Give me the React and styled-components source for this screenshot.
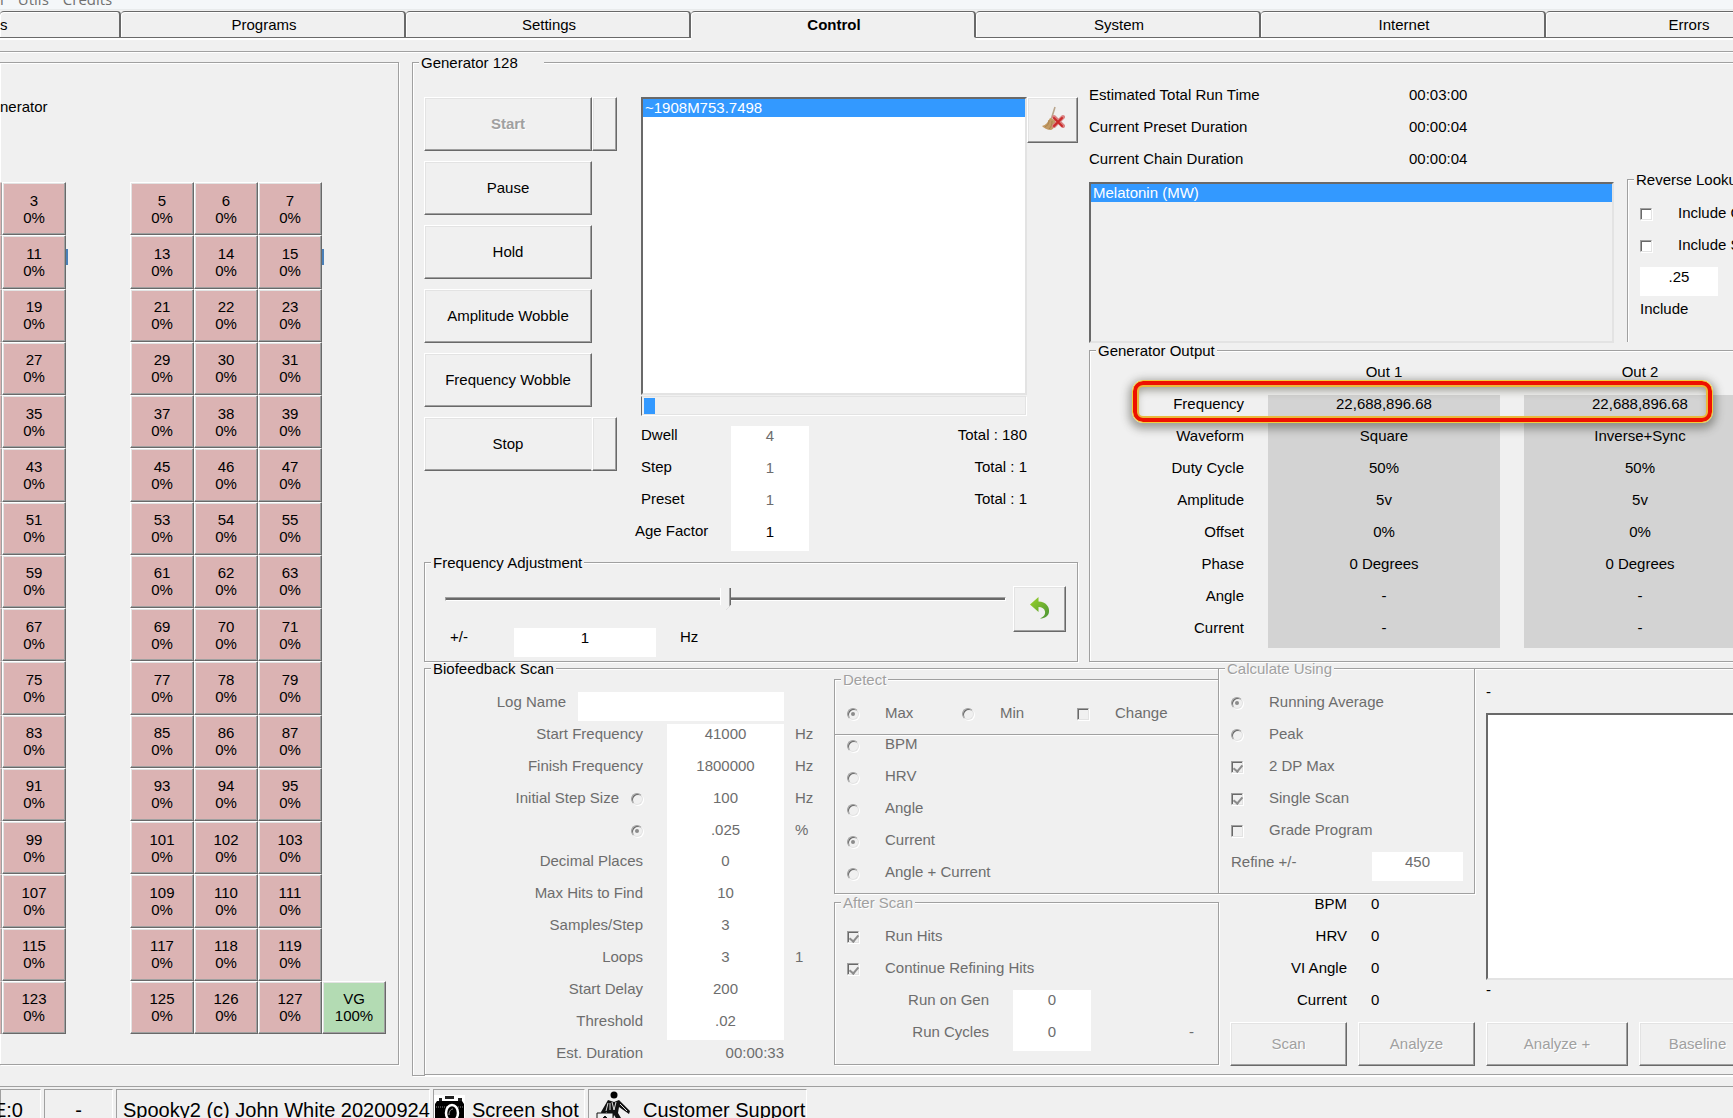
import React, { Fragment } from "react";
import styled, { createGlobalStyle, css } from "styled-components";

const GlobalStyle = createGlobalStyle`
  * {
    box-sizing: border-box;
  }

  body {
    margin: 0;
    overflow-x: hidden;
    background: #f0f0f0;
    color: #000;
    font-family: "Liberation Sans", Arial, sans-serif;
    font-size: 15px;
    line-height: 19px;
  }

  button,
  input {
    font: inherit;
    color: inherit;
  }
`;

const raised = css`
  border: 1px solid;
  border-color: #fff #696969 #696969 #fff;
  box-shadow: inset -1px -1px 0 #a0a0a0, inset 1px 1px 0 #e3e3e3;
`;

const sunken = css`
  border: 2px solid;
  border-color: #696969 #e3e3e3 #e3e3e3 #696969;
`;

const Page = styled.div`
  overflow: hidden;
`;

const MenuBar = styled.nav`
  display: flex;
  align-items: flex-end;
  gap: 14px;
  height: 10px;
  overflow: hidden;
  background: #f4f7f9;
  border-bottom: 1px solid #e8ebec;
`;

const MenuLink = styled.a`
  color: #707070;
  font-family: "Open Sans", sans-serif;
  font-size: 15px;
  line-height: 19px;
  text-decoration: none;
`;

const TabBar = styled.div`
  display: flex;
  height: 30px;
  overflow: hidden;
  padding-top: 1px;
`;

const Tab = styled.button`
  flex: none;
  width: ${p => (p.$partial ? 121 : 285)}px;
  height: 27px;
  padding: ${p => (p.$partial ? "0" : "0 0 0 3px")};
  background: #f0f0f0;
  border: 1px solid #696969;
  border-width: 1px 2px 1px 0;
  border-radius: 4px 4px 0 0;
  box-shadow: inset 1px 1px 0 #fff, 0 2px 0 #fff;
  text-align: ${p => (p.$partial ? "left" : "center")};

  &[aria-selected="true"] {
    border-bottom-color: #f0f0f0;
    box-shadow: inset 1px 1px 0 #fff;
    font-weight: bold;
  }
`;

const Workspace = styled.main`
  display: flex;
  align-items: flex-start;
  margin-top: 11px;
  padding-top: 4px;
  border-top: 1px solid #a0a0a0;
  box-shadow: inset 0 1px 0 #fff;
`;

const Group = styled.fieldset`
  --inset: 0px;
  min-width: 0;
  margin: 0;
  padding: 0 0 0 var(--inset);
  border: 1px solid #a0a0a0;
  box-shadow: 1px 1px 0 #fff, inset 1px 1px 0 #fff;
`;

const Legend = styled.legend`
  margin-left: calc(6px - var(--inset));
  padding: 0 2px;
  background: #f0f0f0;
  line-height: 13px;
  white-space: nowrap;
  color: ${p => (p.$disabled ? "#a0a0a0" : "#000")};
  text-shadow: ${p => (p.$disabled ? "1px 1px 0 #fff" : "none")};
`;

/* generator overview */

const Overview = styled(Group)`
  flex: none;
  margin: 6px 13px 0 0;
  padding: 34px 12px 30px 0;
  border-left: 0;
`;

const OverviewTitle = styled.div`
  height: 85px;
`;

const GeneratorGrid = styled.div`
  display: grid;
  grid-template-columns: 2px repeat(6, 64px);
  grid-template-rows: repeat(16, 1fr);
  height: 852px;
`;

const GeneratorButton = styled.button`
  ${raised}
  padding: 0;
  background: ${p => (p.$active ? "#b3dbb3" : "#dbb3b3")};
  line-height: 17px;
  white-space: pre-line;
`;

const GeneratorEdge = styled.div`
  background: #dbb3b3;
  border: 1px solid;
  border-color: #fff #a0a0a0 #a0a0a0 #dbb3b3;
`;

const Peek = styled.div`
  width: 2px;
  height: 16px;
  margin-top: 14px;
  background: ${p => (p.$visible ? "#4a80b8" : "transparent")};
`;

/* generator control */

const Control = styled(Group)`
  --inset: 11px;
  flex: 1;
  padding-top: 16px;
  border-right: 0;
`;

const ControlLegend = styled(Legend)`
  padding-right: 26px;
`;

const Columns = styled.div`
  display: flex;
  align-items: flex-start;
`;

const RunColumn = styled.div`
  flex: none;
  width: 654px;
  padding-top: 12px;
`;

const StatusColumn = styled.div`
  flex: 1;
  min-width: 0;
  margin-left: 11px;
`;

const ButtonStack = styled.div`
  display: flex;
  flex-direction: column;
  gap: 10px;
  width: 193px;
  margin-right: 24px;
`;

const Split = styled.div`
  display: flex;
`;

const Button = styled.button`
  ${raised}
  flex: none;
  width: ${p => p.$width || 168}px;
  height: ${p => p.$height || 54}px;
  padding: 0 0 2px;
  background: #f0f0f0;
  font-weight: ${p => (p.$bold ? "bold" : "normal")};

  &:disabled {
    color: #a0a0a0;
    text-shadow: 1px 1px 0 #fff;
  }
`;

const StopButton = styled(Button)`
  border-right-color: #f0f0f0;
  box-shadow: inset 0 -1px 0 #a0a0a0, inset 1px 1px 0 #e3e3e3;
`;

const IconButton = styled(Button)`
  display: flex;
  align-items: center;
  justify-content: center;
`;

const RunColumnBody = styled.div`
  width: 386px;
`;

const ListBox = styled.ul`
  ${sunken}
  height: ${p => p.$height}px;
  width: ${p => (p.$width ? `${p.$width}px` : "auto")};
  margin: 0;
  padding: 0;
  flex: none;
  list-style: none;
  background: ${p => (p.$flat ? "#f0f0f0" : "#fff")};
`;

const ListItem = styled.li`
  height: 18px;
  padding-left: 2px;
  background: #3399ff;
  color: #fff;
  line-height: 18px;
`;

const Progress = styled.div`
  height: 20px;
  margin: 1px 0 10px;
  padding: 1px;
  border: 1px solid;
  border-color: #e3e3e3 #fff #fff #696969;
  box-shadow: inset -1px -1px 0 #e3e3e3;
`;

const ProgressBar = styled.div`
  height: 100%;
  margin-left: 1px;
  background: #3399ff;
`;

const Field = styled.input`
  display: block;
  width: 100%;
  height: ${p => p.$height || 29}px;
  padding: 0 0 ${p => (p.$height || 29) - 18}px;
  border: 0;
  border-radius: 0;
  background: #fff;
  text-align: center;

  &:disabled {
    color: #6d6d6d;
  }
`;

const DwellGrid = styled.div`
  display: grid;
  grid-template-columns: 96px 78px 1fr;
  margin-left: -6px;
  line-height: 18px;
`;

const DwellLabel = styled.label`
  padding-left: ${p => (p.$wide ? 0 : 6)}px;
`;

const Right = styled.span`
  text-align: right;
`;

const Adjustment = styled(Group)`
  --inset: 20px;
  margin-top: 5px;
  padding-top: 17px;
  padding-right: 11px;
`;

const AdjustmentRow = styled.div`
  display: flex;
  gap: 7px;
`;

const AdjustmentBody = styled.div`
  flex: 1;
  padding: 2px 0 4px;
`;

const AmountRow = styled.div`
  display: grid;
  grid-template-columns: 64px 142px 1fr;
  margin-top: 18px;
  padding-left: 5px;
  line-height: 18px;
`;

const Unit = styled.span`
  padding-left: 24px;
`;

const Slider = styled.input`
  appearance: none;
  display: block;
  width: 100%;
  height: 22px;
  margin: 0;
  background: transparent;

  &::-webkit-slider-runnable-track {
    height: 4px;
    border: 1px solid;
    border-color: #a0a0a0 #fff #fff #a0a0a0;
    background: #696969;
  }

  &::-webkit-slider-thumb {
    appearance: none;
    width: 11px;
    height: 22px;
    margin-top: -10px;
    background:
      linear-gradient(135deg, transparent 50%, #696969 50%) 6px 16px / 5px 6px no-repeat,
      linear-gradient(90deg, #fff 1px, #f0f0f0 1px 9px, #a0a0a0 9px 10px, #696969 10px);
    clip-path: polygon(0 0, 100% 0, 100% 75%, 50% 100%, 0 75%);
  }
`;

const TimeRow = styled.div`
  display: grid;
  grid-template-columns: 320px 1fr;
  height: 32px;
`;

const LookupRow = styled.div`
  display: flex;
  align-items: stretch;
  margin-top: 1px;
`;

const Lookup = styled(Group)`
  --inset: 12px;
  flex: 1;
  margin: -9px 0 1px 13px;
  padding-top: 17px;
  border-right: 0;
  border-bottom: 0;
  box-shadow: inset 1px 1px 0 #fff;
`;

const NarrowField = styled.div`
  width: ${p => p.$width}px;
  height: ${p => p.$height}px;
`;

const Output = styled(Group)`
  position: relative;
  margin-top: 1px;
  padding: 6px 0 13px;
  border-right: 0;
`;

const OutputTable = styled.table`
  width: 666px;
  table-layout: fixed;
  border-collapse: collapse;
  line-height: 17px;

  th,
  td {
    height: 32px;
    padding: 0;
    font-weight: normal;
    text-align: center;
    vertical-align: top;
  }

  th:first-child {
    width: 178px;
    padding-right: 24px;
    text-align: right;
  }

  td {
    background: #d3d3d3;
  }

  td + td {
    background: linear-gradient(90deg, #f0f0f0 24px, #d3d3d3 24px);
  }

  thead th + th + th,
  td + td {
    width: 256px;
    padding-left: 24px;
  }

  tbody tr:last-child > * {
    height: 29px;
  }
`;

const Highlight = styled.div`
  position: absolute;
  top: 23px;
  left: 42px;
  width: 581px;
  height: 43px;
  border: 1px solid #f2cf3c;
  border-radius: 11px;
  box-shadow: inset 0 0 0 4px #ee1100, inset 0 0 0 6px #eab93c, inset 0 6px 8px 3px rgba(70, 70, 50, 0.5),
    0 3px 8px 3px rgba(60, 60, 50, 0.45);
  pointer-events: none;
`;

/* biofeedback */

const Biofeedback = styled(Group)`
  padding-bottom: 8px;
  border-right: 0;
`;

const ScanColumn = styled.div`
  flex: none;
  width: 409px;
  padding-top: 17px;
  color: #6d6d6d;
`;

const LogRow = styled.div`
  display: grid;
  grid-template-columns: 141px 206px;
  column-gap: 12px;
  height: 32px;
  text-align: right;
`;

const ScanRow = styled.div`
  display: grid;
  grid-template-columns: 218px 117px 1fr;
  column-gap: 24px;
`;

const DurationRow = styled(ScanRow)`
  padding-top: 3px;
`;

const ScanLabel = styled.label`
  display: flex;
  justify-content: flex-end;
  gap: 12px;
`;

const ScanUnit = styled.span`
  margin-left: -13px;
`;

const DetectColumn = styled.div`
  flex: none;
  width: 385px;
  margin-top: -2px;
`;

const Detect = styled(Group)`
  --inset: 12px;
  padding-top: 17px;
  padding-bottom: 12px;
`;

const DetectModes = styled.div`
  display: grid;
  grid-template-columns: 115px 115px 1fr;
  height: 19px;
`;

const DetectSource = styled.div`
  height: 159px;
  padding-left: 12px;
  border: 1px solid #a0a0a0;
  border-top: 0;
  box-shadow: 1px 1px 0 #fff, inset 1px 1px 0 #fff;
  line-height: 17px;
`;

const AfterScan = styled(Group)`
  --inset: 12px;
  margin-top: 2px;
  padding-top: 17px;
  padding-bottom: 13px;
`;

const AfterRow = styled.div`
  display: grid;
  grid-template-columns: 142px 78px 1fr;
  column-gap: 24px;
  color: #6d6d6d;
  text-align: right;
`;

const AfterNote = styled.span`
  padding-right: 24px;
`;

const ResultColumn = styled.div`
  flex: 1;
  min-width: 0;
  margin-left: -1px;
`;

const CalculateColumn = styled.div`
  flex: none;
  width: 257px;
  margin-top: -13px;
`;

const Calculate = styled(Group)`
  --inset: 12px;
  padding-top: 17px;
  padding-right: 11px;
  padding-bottom: 12px;
`;

const RefineRow = styled.div`
  display: flex;
  justify-content: space-between;
  color: #6d6d6d;
`;

const Readout = styled.div`
  display: grid;
  grid-template-columns: 129px 1fr;
  column-gap: 24px;
  height: 32px;
`;

const GraphColumn = styled.div`
  flex: 1;
  margin-left: 11px;
  padding-top: 7px;
`;

const GraphNote = styled.div`
  height: 31px;
`;

const Graph = styled.div`
  ${sunken}
  height: 267px;
  background: #fff;
  border-right: 0;
`;

const ScanButtons = styled.div`
  display: flex;
  gap: 11px;
  padding-left: 12px;
`;

/* check boxes and radios */

const Tick = styled.input`
  appearance: none;
  flex: none;
  width: 12px;
  height: 12px;
  margin: 5px 0 0;
  border: 1px solid;
  border-color: #a0a0a0 #e3e3e3 #e3e3e3 #a0a0a0;
  background: #fff;
  box-shadow: 1px 1px 0 #fff, inset 1px 1px 0 #696969;

  &[type="radio"] {
    border-radius: 50%;
  }

  &:disabled {
    background: #f0f0f0;
  }

  &:checked::before {
    content: "";
    display: block;
  }

  &[type="radio"]:checked::before {
    width: 4px;
    height: 4px;
    margin: 3px;
    border-radius: 50%;
    background: #8c8c8c;
  }

  &[type="checkbox"]:checked::before {
    width: 4px;
    height: 7px;
    margin: 1px 3px;
    border: solid #8c8c8c;
    border-width: 0 2px 2px 0;
    transform: rotate(40deg);
  }
`;

const OptionLabel = styled.label`
  display: flex;
  gap: 26px;
  height: 32px;
  white-space: nowrap;
  color: ${p => (p.$disabled ? "#6d6d6d" : "#000")};
`;

/* status bar */

const StatusBar = styled.footer`
  display: flex;
  gap: 3px;
  height: 33px;
  margin-top: 10px;
  padding-top: 2px;
  overflow: hidden;
  border-top: 1px solid #a0a0a0;
  font-size: 20px;
  line-height: 24px;
`;

const StatusCell = styled.div`
  display: flex;
  flex: none;
  justify-content: ${p => p.$align || "flex-start"};
  width: ${p => p.$width}px;
  height: 40px;
  padding: 8px ${p => p.$pad || 0}px 0;
  border: 1px solid;
  border-color: #a0a0a0 #fff #fff #a0a0a0;
  white-space: nowrap;
`;

const StatusLink = styled.a`
  display: flex;
  gap: ${p => p.$gap}px;
  color: inherit;
  text-decoration: none;

  svg {
    flex: none;
    margin-top: ${p => p.$lift || 0}px;
  }
`;

const BroomIcon = () => (
  <svg width="24" height="26" viewBox="0 0 24 26" aria-hidden="true">
    <path d="M14 1l-4 13" stroke="#b9a58c" strokeWidth="1.6" />
    <path d="M9 12l5 2c1 5-1 9-4 10-4 0-7-2-9-4 4-1 6-4 8-8z" fill="#c39a63" />
    <path d="M8 14c0 4-2 6-4 7M11 15c0 4-1 6-3 8" stroke="#a8824f" strokeWidth="1" fill="none" />
    <path d="M13 11l9 9M22 11l-9 9" stroke="#d98080" strokeWidth="4" strokeLinecap="round" />
    <path d="M13 12l8 8M21 12l-8 8" stroke="#cb2a2a" strokeWidth="2" strokeLinecap="round" />
  </svg>
);

const UndoIcon = () => (
  <svg width="20" height="22" viewBox="0 0 20 22" aria-hidden="true">
    <defs>
      <linearGradient id="leaf" x1="0" y1="0" x2="1" y2="1">
        <stop offset="0" stopColor="#9bd32a" />
        <stop offset="1" stopColor="#4a9436" />
      </linearGradient>
    </defs>
    <path d="M0 7.500L8.500 0v4.500C16 5 19.500 9.500 19 15c-.5 4-4 6.500-9 6.500 4-2 5.500-4 5-7-.5-3-3-4.500-6.500-4.500v5z" fill="url(#leaf)" />
  </svg>
);

const CameraIcon = () => (
  <svg width="31" height="32" viewBox="0 0 31 32" aria-hidden="true">
    <path d="M0 0h31v32H0z" fill="#fff" />
    <path d="M5 3h3v3H5zM11 1h9v3h-9zM24 3h4v3h-4z" fill="#222" />
    <path d="M3 6h25l2 3v23H1V9z" />
    <path d="M2 12h27" stroke="#888" strokeDasharray="1 1" />
    <ellipse cx="18" cy="18" rx="6" ry="8" stroke="#fff" strokeWidth="2.500" />
    <path d="M15 20c0-4 2-6 4-6" stroke="#aaa" fill="none" />
  </svg>
);

const SupportIcon = () => (
  <svg width="36" height="32" viewBox="0 0 36 32" aria-hidden="true">
    <circle cx="18" cy="4" r="3.500" />
    <path d="M12 9l6 2 5-2 5 5 6 6-1 3-10-7-1 6 6 10h-5l-5-8-3 8h-5l1-11-5 3-1-3z" fill="#111" />
    <path d="M16 11l2 8M20 11l-2 8M12 12l-2 8M14 12v7M24 13l7 7" stroke="#ddd" strokeWidth="1" fill="none" />
    <path d="M1 22h16v10H1z" fill="#f0f0f0" stroke="#111" />
    <path d="M7 27h4M9 25v6" stroke="#111" strokeWidth="2" />
  </svg>
);

const TABS = ["Programs", "Settings", "Control", "System", "Internet", "Errors"];

const ROWS = Array.from({ length: 16 }, (_, i) => i * 8);

const TIMES = [
  ["Estimated Total Run Time", "00:03:00"],
  ["Current Preset Duration", "00:00:04"],
  ["Current Chain Duration", "00:00:04"]
];

const DWELL = [
  ["Dwell", "4", "Total : 180"],
  ["Step", "1", "Total : 1"],
  ["Preset", "1", "Total : 1"],
  ["Age Factor", "1", ""]
];

const OUTPUTS = [
  ["Frequency", "22,688,896.68", "22,688,896.68"],
  ["Waveform", "Square", "Inverse+Sync"],
  ["Duty Cycle", "50%", "50%"],
  ["Amplitude", "5v", "5v"],
  ["Offset", "0%", "0%"],
  ["Phase", "0 Degrees", "0 Degrees"],
  ["Angle", "-", "-"],
  ["Current", "-", "-"]
];

const SCAN = [
  { label: "Start Frequency", value: "41000", unit: "Hz", height: 32 },
  { label: "Finish Frequency", value: "1800000", unit: "Hz", height: 32 },
  { label: "Initial Step Size", value: "100", unit: "Hz", height: 32, radio: true },
  { label: "", value: ".025", unit: "%", height: 31, radio: true, checked: true },
  { label: "Decimal Places", value: "0", height: 32 },
  { label: "Max Hits to Find", value: "10", height: 32 },
  { label: "Samples/Step", value: "3", height: 32 },
  { label: "Loops", value: "3", unit: "1", height: 32 },
  { label: "Start Delay", value: "200", height: 32 },
  { label: "Threshold", value: ".02", height: 29 }
];

const Option = ({ type = "checkbox", label, name, checked, disabled }) => (
  <OptionLabel $disabled={disabled}>
    <Tick type={type} name={name} defaultChecked={checked} disabled={disabled} />
    {label}
  </OptionLabel>
);

const GeneratorCell = ({ number }) => (
  <GeneratorButton>{`${number}\n0%`}</GeneratorButton>
);

const App = () => (
  <Page>
    <GlobalStyle />
    <MenuBar>
      <MenuLink href="#control">l</MenuLink>
      <MenuLink href="#utils">Utils</MenuLink>
      <MenuLink href="#credits">Credits</MenuLink>
    </MenuBar>

    <TabBar role="tablist">
      <Tab role="tab" $partial>s</Tab>
      {TABS.map(tab => (
        <Tab key={tab} role="tab" aria-selected={tab === "Control"}>
          {tab}
        </Tab>
      ))}
    </TabBar>

    <Workspace>
      <Overview as="section">
        <OverviewTitle>nerator</OverviewTitle>
        <GeneratorGrid>
          {ROWS.map((base, row) => (
            <Fragment key={base}>
              <GeneratorEdge />
              <GeneratorCell number={base + 3} />
              <Peek $visible={row === 1} />
              <GeneratorCell number={base + 5} />
              <GeneratorCell number={base + 6} />
              <GeneratorCell number={base + 7} />
              {row === 15 ? (
                <GeneratorButton $active>{"VG\n100%"}</GeneratorButton>
              ) : (
                <Peek $visible={row === 1} />
              )}
            </Fragment>
          ))}
        </GeneratorGrid>
      </Overview>

      <Control>
        <ControlLegend>Generator 128</ControlLegend>
        <Columns>
          <RunColumn>
            <Columns>
              <ButtonStack>
                <Split>
                  <Button disabled $bold>Start</Button>
                  <Button disabled $width={25} aria-label="Start" />
                </Split>
                <Button>Pause</Button>
                <Button>Hold</Button>
                <Button>Amplitude Wobble</Button>
                <Button>Frequency Wobble</Button>
                <Split>
                  <StopButton>Stop</StopButton>
                  <Button $width={25} aria-label="Stop" />
                </Split>
              </ButtonStack>
              <RunColumnBody>
                <ListBox $height={298}>
                  <ListItem>~1908M753.7498</ListItem>
                </ListBox>
                <Progress>
                  <ProgressBar style={{ width: "3%" }} />
                </Progress>
                <DwellGrid>
                  {DWELL.map(([label, value, total], i) => (
                    <Fragment key={label}>
                      <DwellLabel htmlFor={label} $wide={i === 3}>{label}</DwellLabel>
                      <Field id={label} defaultValue={value} disabled={i < 3} $height={i < 3 ? 32 : 29} />
                      <Right>{total}</Right>
                    </Fragment>
                  ))}
                </DwellGrid>
              </RunColumnBody>
              <IconButton $width={51} $height={46} aria-label="Clear">
                <BroomIcon />
              </IconButton>
            </Columns>

            <Adjustment>
              <Legend>Frequency Adjustment</Legend>
              <AdjustmentRow>
                <AdjustmentBody>
                  <Slider type="range" defaultValue="50" aria-label="Frequency Adjustment" />
                  <AmountRow>
                    <label htmlFor="amount">+/-</label>
                    <Field id="amount" defaultValue="1" />
                    <Unit>Hz</Unit>
                  </AmountRow>
                </AdjustmentBody>
                <IconButton $width={53} $height={46} aria-label="Undo">
                  <UndoIcon />
                </IconButton>
              </AdjustmentRow>
            </Adjustment>
          </RunColumn>

          <StatusColumn>
            {TIMES.map(([label, value]) => (
              <TimeRow key={label}>
                <span>{label}</span>
                <span>{value}</span>
              </TimeRow>
            ))}
            <LookupRow>
              <ListBox $height={161} $width={525} $flat>
                <ListItem>Melatonin (MW)</ListItem>
              </ListBox>
              <Lookup>
                <Legend>Reverse Lookup</Legend>
                <Option label="Include C" />
                <Option label="Include S" />
                <NarrowField $width={78} $height={32}>
                  <Field id="include" defaultValue=".25" />
                </NarrowField>
                <label htmlFor="include">Include</label>
              </Lookup>
            </LookupRow>

            <Output>
              <Legend>Generator Output</Legend>
              <OutputTable>
                <thead>
                  <tr>
                    <th />
                    <th>Out 1</th>
                    <th>Out 2</th>
                  </tr>
                </thead>
                <tbody>
                  {OUTPUTS.map(([label, one, two]) => (
                    <tr key={label}>
                      <th>{label}</th>
                      <td>{one}</td>
                      <td>{two}</td>
                    </tr>
                  ))}
                </tbody>
              </OutputTable>
              <Highlight />
            </Output>
          </StatusColumn>
        </Columns>

        <Biofeedback>
          <Legend>Biofeedback Scan</Legend>
          <Columns>
            <ScanColumn>
              <LogRow>
                <label htmlFor="log">Log Name</label>
                <Field id="log" disabled />
              </LogRow>
              {SCAN.map(({ label, value, unit, height, radio, checked }, i) => (
                <ScanRow key={value + label}>
                  <ScanLabel htmlFor={`scan${i}`}>
                    {label}
                    {radio && <Tick type="radio" name="step" defaultChecked={checked} disabled />}
                  </ScanLabel>
                  <Field id={`scan${i}`} defaultValue={value} disabled $height={height} />
                  <ScanUnit>{unit}</ScanUnit>
                </ScanRow>
              ))}
              <DurationRow>
                <Right>Est. Duration</Right>
                <Right>00:00:33</Right>
              </DurationRow>
            </ScanColumn>

            <DetectColumn>
              <Detect>
                <Legend $disabled>Detect</Legend>
                <DetectModes>
                  <Option type="radio" name="mode" label="Max" checked disabled />
                  <Option type="radio" name="mode" label="Min" disabled />
                  <Option label="Change" disabled />
                </DetectModes>
              </Detect>
              <DetectSource>
                <Option type="radio" name="source" label="BPM" disabled />
                <Option type="radio" name="source" label="HRV" disabled />
                <Option type="radio" name="source" label="Angle" disabled />
                <Option type="radio" name="source" label="Current" checked disabled />
                <Option type="radio" name="source" label="Angle + Current" disabled />
              </DetectSource>
              <AfterScan>
                <Legend $disabled>After Scan</Legend>
                <Option label="Run Hits" checked disabled />
                <Option label="Continue Refining Hits" checked disabled />
                <AfterRow>
                  <label htmlFor="gen">Run on Gen</label>
                  <Field id="gen" defaultValue="0" disabled $height={32} />
                </AfterRow>
                <AfterRow>
                  <label htmlFor="cycles">Run Cycles</label>
                  <Field id="cycles" defaultValue="0" disabled />
                  <AfterNote>-</AfterNote>
                </AfterRow>
              </AfterScan>
            </DetectColumn>

            <ResultColumn>
              <Columns>
                <CalculateColumn>
                  <Calculate>
                    <Legend $disabled>Calculate Using</Legend>
                    <Option type="radio" name="calc" label="Running Average" checked disabled />
                    <Option type="radio" name="calc" label="Peak" disabled />
                    <Option label="2 DP Max" checked disabled />
                    <Option label="Single Scan" checked disabled />
                    <Option label="Grade Program" disabled />
                    <RefineRow>
                      <label htmlFor="refine">Refine +/-</label>
                      <NarrowField $width={91} $height={29}>
                        <Field id="refine" defaultValue="450" disabled />
                      </NarrowField>
                    </RefineRow>
                  </Calculate>
                  {["BPM", "HRV", "VI Angle", "Current"].map(label => (
                    <Readout key={label}>
                      <Right>{label}</Right>
                      <span>0</span>
                    </Readout>
                  ))}
                </CalculateColumn>
                <GraphColumn>
                  <GraphNote>-</GraphNote>
                  <Graph />
                  <GraphNote>-</GraphNote>
                </GraphColumn>
              </Columns>
              <ScanButtons>
                <Button disabled $width={117} $height={44}>Scan</Button>
                <Button disabled $width={117} $height={44}>Analyze</Button>
                <Button disabled $width={142} $height={44}>Analyze +</Button>
                <Button disabled $width={117} $height={44}>Baseline</Button>
              </ScanButtons>
            </ResultColumn>
          </Columns>
        </Biofeedback>
      </Control>
    </Workspace>

    <StatusBar>
      <StatusCell $width={41} $align="flex-end" $pad={17}>E:0</StatusCell>
      <StatusCell $width={69} $align="center">-</StatusCell>
      <StatusCell $width={314} $pad={6}>Spooky2 (c) John White 20200924</StatusCell>
      <StatusCell $width={152}>
        <StatusLink href="#shot" $gap={7} $lift={-3}>
          <CameraIcon />
          Screen shot
        </StatusLink>
      </StatusCell>
      <StatusCell $width={219} $pad={7}>
        <StatusLink href="#support" $gap={11} $lift={-7}>
          <SupportIcon />
          Customer Support
        </StatusLink>
      </StatusCell>
    </StatusBar>
  </Page>
);

export default App;
